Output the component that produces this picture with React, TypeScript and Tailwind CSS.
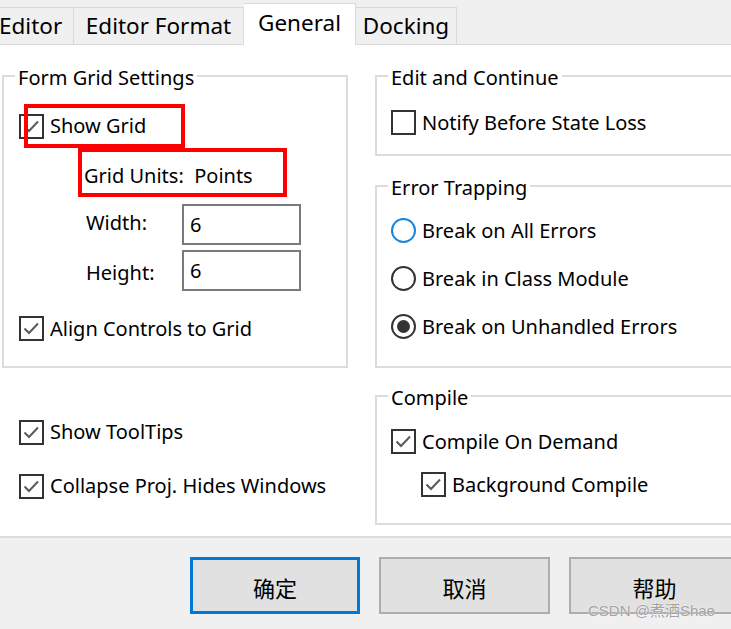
import React from "react";

function Check({ checked = true }: { checked?: boolean }) {
  return (
    <span className="w-[25px] h-[25px] border-2 border-[#333333] bg-white flex items-center justify-center shrink-0">
      {checked && (
        <svg width="21" height="21" viewBox="0 0 21 21">
          <path d="M3.5 10.5 L8 15 L17 5.5" stroke="#5a5a5a" strokeWidth="2" fill="none" />
        </svg>
      )}
    </span>
  );
}

function Radio({ selected = false, focus = false }: { selected?: boolean; focus?: boolean }) {
  return (
    <span
      className={
        focus
          ? "w-[25px] h-[25px] rounded-full border-2 border-[#1a83dd] bg-white flex items-center justify-center shrink-0"
          : "w-[25px] h-[25px] rounded-full border-2 border-[#333333] bg-white flex items-center justify-center shrink-0"
      }
    >
      {selected && <span className="w-[13px] h-[13px] rounded-full bg-[#333333]" />}
    </span>
  );
}

function Legend({ children }: { children: React.ReactNode }) {
  return <legend className="ml-[11px] px-[3px] pt-[4px] leading-[22px]">{children}</legend>;
}

export default function App() {
  return (
    <div className="w-[731px] h-[629px] overflow-hidden relative bg-white font-['Noto_Sans',sans-serif] text-[20px] text-black whitespace-nowrap">
      {/* Tabs */}
      <div className="h-[45px] bg-[#f0f0f0] flex items-end text-[22.5px]">
        <div className="w-[75px] h-[38px] shrink-0 border-r border-b border-t border-[#d9d9d9] flex items-center -ml-[1px] pb-[1px]">
          <span>Editor</span>
        </div>
        <div className="w-[170px] h-[38px] shrink-0 border-r border-b border-t border-[#d9d9d9] flex items-center justify-center pb-[1px]">
          <span>Editor Format</span>
        </div>
        <div className="w-[112px] h-[42px] shrink-0 border-r border-t border-[#d9d9d9] bg-white flex justify-center pt-[2px]">
          <span>General</span>
        </div>
        <div className="w-[101px] h-[38px] shrink-0 border-r border-b border-t border-[#d9d9d9] flex items-center justify-center pb-[1px]">
          <span>Docking</span>
        </div>
        <div className="flex-1 border-b border-[#d9d9d9]" />
      </div>

      {/* Content */}
      <div className="h-[491px] flex">
        {/* Left column */}
        <div className="ml-[2px] w-[346px] shrink-0 flex flex-col">
          <fieldset className="mt-[18px] border-2 border-[#dcdcdc] pb-[25px]">
            <Legend>Form Grid Settings</Legend>
            <div className="mt-[24px] h-[26px] pl-[15px] flex items-center gap-[6px]">
              <Check />
              <span>Show Grid</span>
            </div>
            <div className="mt-[22px] h-[30px] pl-[80px] flex items-center">
              <span>Grid Units:&nbsp; Points</span>
            </div>
            <div className="mt-[13px] h-[41px] pl-[82px] flex items-center">
              <span className="w-[96px] mb-[4px]">Width:</span>
              <div className="w-[119px] h-[41px] border-2 border-[#7a7a7a] flex items-center pl-[6px]">6</div>
            </div>
            <div className="mt-[5px] h-[41px] pl-[82px] flex items-center">
              <span className="w-[96px] mt-[4px]">Height:</span>
              <div className="w-[119px] h-[41px] border-2 border-[#7a7a7a] flex items-start pt-[4px] pl-[6px]">6</div>
            </div>
            <div className="mt-[25px] h-[25px] pl-[15px] flex items-center gap-[6px]">
              <Check />
              <span>Align Controls to Grid</span>
            </div>
          </fieldset>
          <div className="mt-[51px] h-[26px] pl-[17px] flex items-center gap-[6px]">
            <Check />
            <span>Show ToolTips</span>
          </div>
          <div className="mt-[28px] h-[26px] pl-[17px] flex items-center gap-[6px]">
            <Check />
            <span>Collapse Proj. Hides Windows</span>
          </div>
        </div>

        {/* Right column */}
        <div className="ml-[27px] w-[400px] shrink-0 flex flex-col">
          <fieldset className="mt-[18px] border-2 border-[#dcdcdc] pb-[19px]">
            <Legend>Edit and Continue</Legend>
            <div className="mt-[21px] h-[25px] pl-[14px] flex items-center gap-[6px]">
              <Check checked={false} />
              <span>Notify Before State Loss</span>
            </div>
          </fieldset>
          <fieldset className="mt-[17px] border-2 border-[#dcdcdc] pb-[27px]">
            <Legend>Error Trapping</Legend>
            <div className="mt-[19px] h-[25px] pl-[14px] flex items-center gap-[6px]">
              <Radio focus />
              <span>Break on All Errors</span>
            </div>
            <div className="mt-[23px] h-[25px] pl-[14px] flex items-center gap-[6px]">
              <Radio />
              <span>Break in Class Module</span>
            </div>
            <div className="mt-[23px] h-[25px] pl-[14px] flex items-center gap-[6px]">
              <Radio selected />
              <span>Break on Unhandled Errors</span>
            </div>
          </fieldset>
          <fieldset className="mt-[15px] border-2 border-[#dcdcdc] pb-[26px]">
            <Legend>Compile</Legend>
            <div className="mt-[20px] h-[25px] pl-[14px] flex items-center gap-[6px]">
              <Check />
              <span>Compile On Demand</span>
            </div>
            <div className="mt-[18px] h-[25px] pl-[44px] flex items-center gap-[6px]">
              <Check />
              <span>Background Compile</span>
            </div>
          </fieldset>
        </div>
      </div>

      {/* Bottom bar */}
      <div className="h-[93px] border-t-2 border-[#dcdcdc] bg-[#f0f0f0] pt-[19px] pl-[190px] flex gap-[19px] font-['Noto_Sans_CJK_SC',sans-serif] text-[22px]">
        <div className="w-[170px] h-[57px] shrink-0 border-[3px] border-[#0078d7] bg-[#e1e1e1] flex items-center justify-center pt-[3px]">确定</div>
        <div className="w-[171px] h-[57px] shrink-0 border-2 border-[#adadad] bg-[#e1e1e1] flex items-center justify-center pt-[3px]">取消</div>
        <div className="w-[171px] h-[57px] shrink-0 border-2 border-[#adadad] bg-[#e1e1e1] flex items-center justify-center pt-[3px]">帮助</div>
      </div>

      {/* Red annotation boxes */}
      <div className="absolute left-[24px] top-[104px] w-[161px] h-[44px] border-4 border-[#ff0000]" />
      <div className="absolute left-[78px] top-[148px] w-[209px] h-[49px] border-4 border-[#ff0000]" />

      {/* Watermark */}
      <div className="absolute left-[588px] top-[601px] text-[15px] leading-[20px] text-[#a3a3a3] font-['Liberation_Sans','Noto_Sans_CJK_SC',sans-serif] [text-shadow:0_0_2px_#ffffff]">
        CSDN @煮酒Shae
      </div>
    </div>
  );
}
